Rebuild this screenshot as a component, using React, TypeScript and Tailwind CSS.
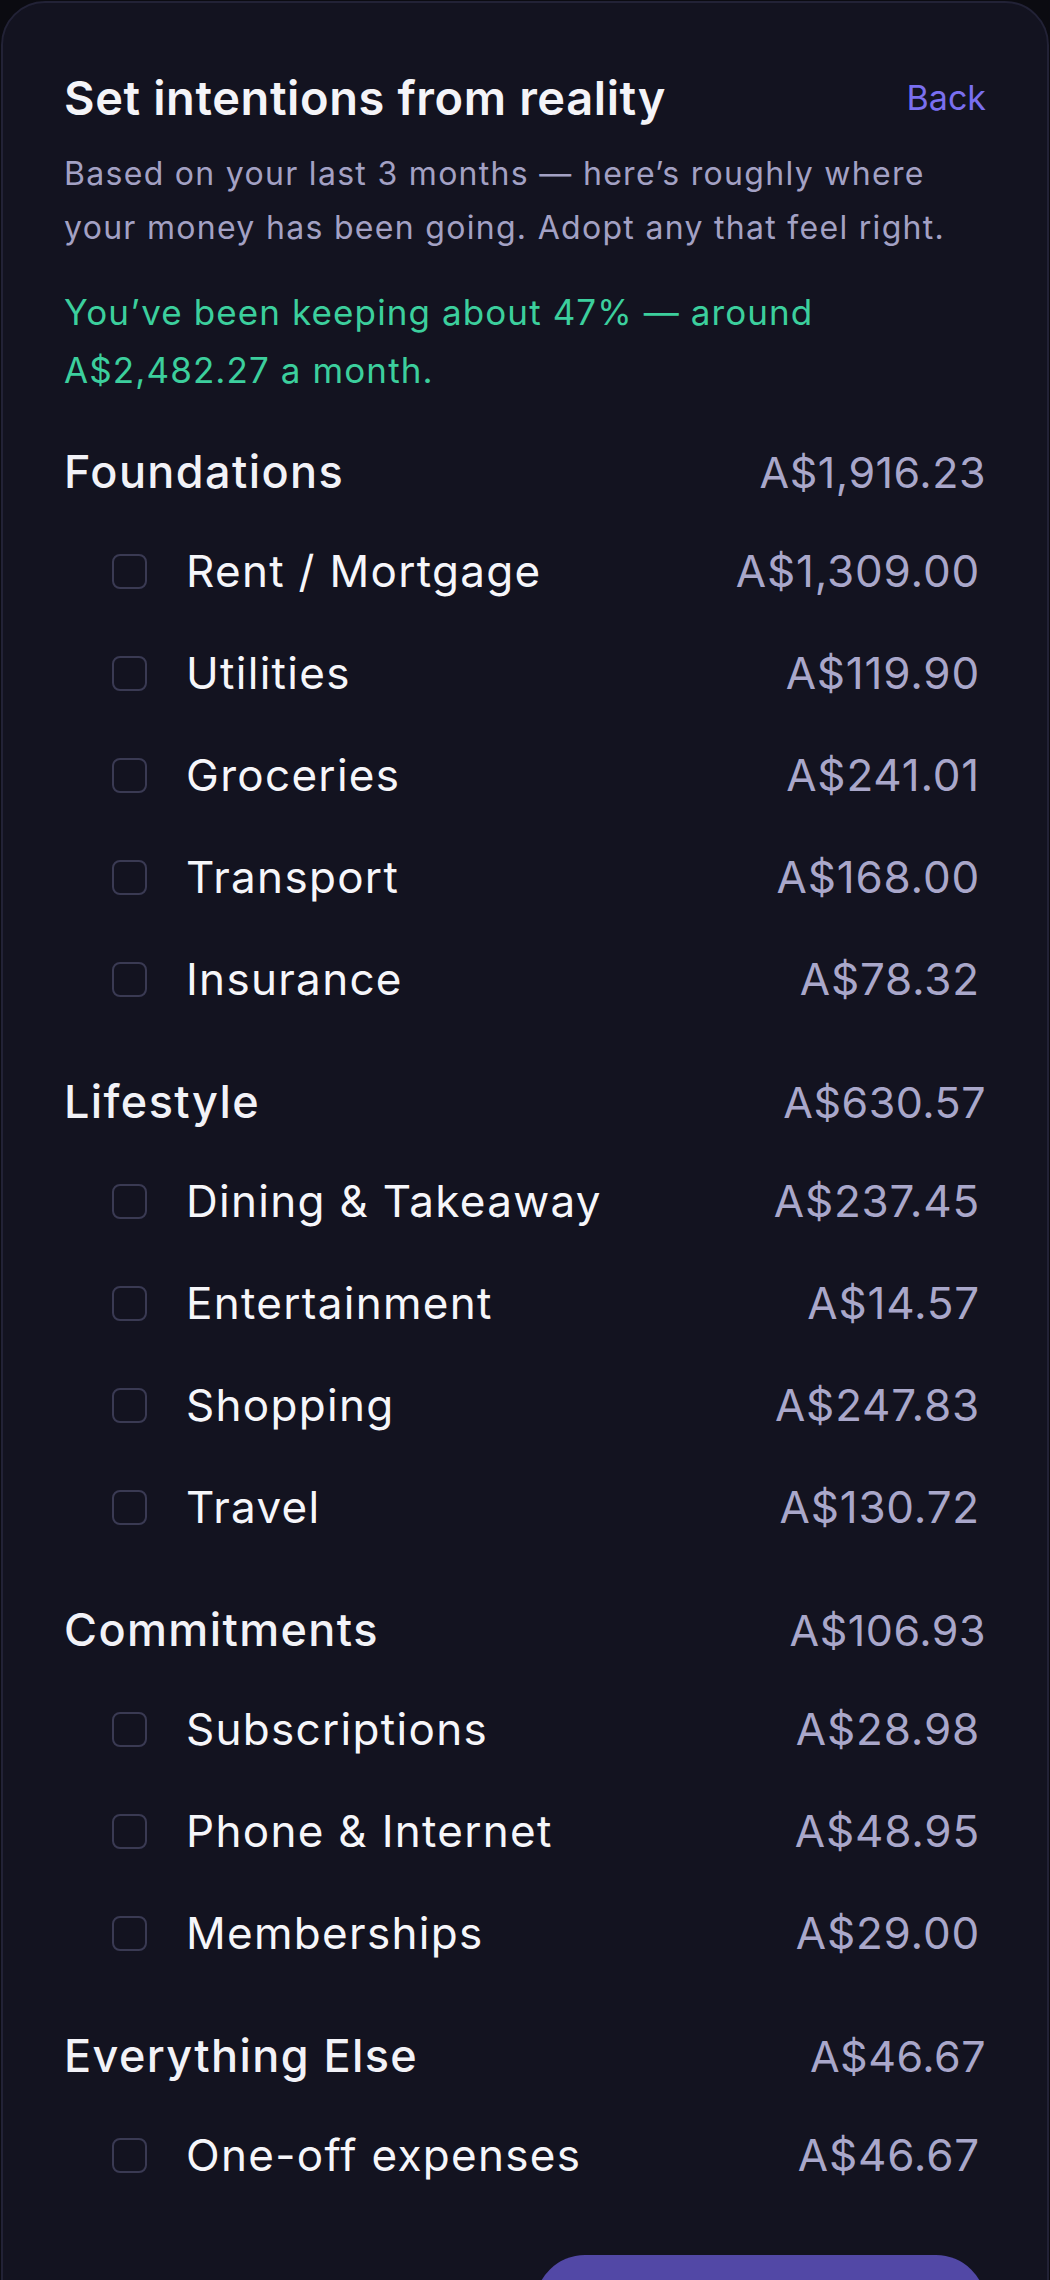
import React from "react";

type Item = { name: string; amount: string };
type Group = { title: string; total: string; items: Item[] };

const groups: Group[] = [
  {
    title: "Foundations",
    total: "A$1,916.23",
    items: [
      { name: "Rent / Mortgage", amount: "A$1,309.00" },
      { name: "Utilities", amount: "A$119.90" },
      { name: "Groceries", amount: "A$241.01" },
      { name: "Transport", amount: "A$168.00" },
      { name: "Insurance", amount: "A$78.32" },
    ],
  },
  {
    title: "Lifestyle",
    total: "A$630.57",
    items: [
      { name: "Dining & Takeaway", amount: "A$237.45" },
      { name: "Entertainment", amount: "A$14.57" },
      { name: "Shopping", amount: "A$247.83" },
      { name: "Travel", amount: "A$130.72" },
    ],
  },
  {
    title: "Commitments",
    total: "A$106.93",
    items: [
      { name: "Subscriptions", amount: "A$28.98" },
      { name: "Phone & Internet", amount: "A$48.95" },
      { name: "Memberships", amount: "A$29.00" },
    ],
  },
  {
    title: "Everything Else",
    total: "A$46.67",
    items: [{ name: "One-off expenses", amount: "A$46.67" }],
  },
];

const App = () => {
  return (
    <div
      className="h-[2280px] w-full overflow-hidden bg-[#0b0b11] px-px pt-px"
      style={{ fontFamily: "Inter, 'Noto Sans', sans-serif" }}
    >
      <div className="min-h-[2400px] rounded-t-[44px] border-2 border-[#222236] bg-[#131320] px-[61px] pt-[66px]">
        <div className="flex items-center justify-between">
          <h1 className="text-[47px] font-semibold leading-[58px] tracking-[0.6px] text-[#f4f4f8]">
            Set intentions from reality
          </h1>
          <button className="text-[34px] leading-[56px] text-[#7a6ff0]">Back</button>
        </div>
        <p className="mt-[20px] text-[32px] leading-[54px] tracking-[1.3px] text-[#a3a1c4]">
          Based on your last 3 months — here’s roughly where your money has been going. Adopt any
          that feel right.
        </p>
        <p className="mt-[28px] w-[820px] text-[35px] leading-[58px] tracking-[1.1px] text-[#3ccf9d]">
          You’ve been keeping about 47% — around A$2,482.27 a month.
        </p>

        <div className="mt-[25px] flex flex-col gap-[24px]">
          {groups.map((g) => (
            <section key={g.title}>
              <div className="flex h-[96px] items-center justify-between">
                <h2 className="text-[45px] font-medium tracking-[1.4px] text-[#f2f2f7]">
                  {g.title}
                </h2>
                <span className="text-[43px] tracking-[0.5px] text-[#a9a7ca]">{g.total}</span>
              </div>
              {g.items.map((it) => (
                <label key={it.name} className="flex h-[102px] items-center pl-[48px] pr-[6px]">
                  <span className="h-[35px] w-[35px] shrink-0 rounded-[8px] border-[2.5px] border-[#3a3a53]" />
                  <span className="ml-[39px] flex-1 text-[44px] tracking-[1.3px] text-[#f6f6fa]">
                    {it.name}
                  </span>
                  <span className="text-[44px] tracking-[0.8px] text-[#a9a7ca]">{it.amount}</span>
                </label>
              ))}
            </section>
          ))}
        </div>

        <div className="mt-[49px] flex justify-end">
          <button className="h-[100px] w-[451px] rounded-[50px] bg-[#5248a6]" />
        </div>
      </div>
    </div>
  );
};

export default App;
